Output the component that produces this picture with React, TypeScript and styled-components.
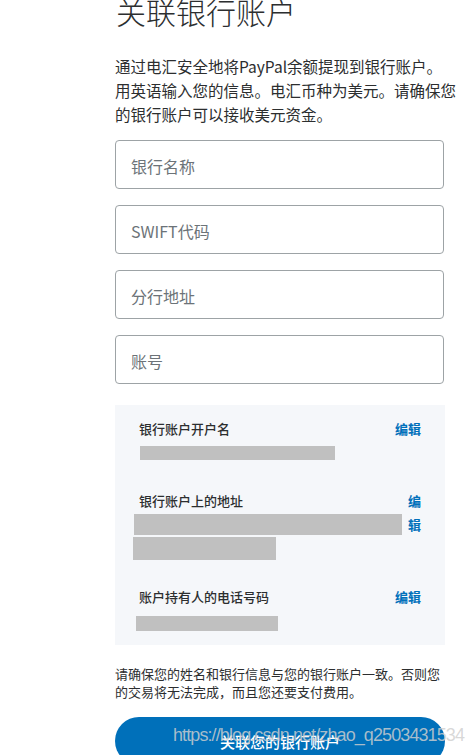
import styled, { createGlobalStyle } from "styled-components";

const GlobalStyle = createGlobalStyle`
  body {
    margin: 0;
    background: #fff;
    font-family: "Noto Sans CJK SC", "Noto Sans", sans-serif;
    color: #2c2e2f;
  }
`;

type Bar = { w: number; h: number; mt: number; ml: number; mb?: number };

type Detail = {
  label: string;
  bars: Bar[];
  narrowLink?: boolean;
};

const details: Detail[] = [
  { label: "银行账户开户名", bars: [{ w: 195, h: 14, mt: 5, ml: 1, mb: 4 }] },
  {
    label: "银行账户上的地址",
    narrowLink: true,
    bars: [
      { w: 268, h: 21, mt: 1, ml: -5 },
      { w: 143, h: 23, mt: 2, ml: -6 },
    ],
  },
  { label: "账户持有人的电话号码", bars: [{ w: 142, h: 15, mt: 7, ml: -3 }] },
];

const fields = ["银行名称", "SWIFT代码", "分行地址", "账号"];

const App = () => {
  return (
    <>
      <GlobalStyle />
      <Main>
        <Title>关联银行账户</Title>
        <Intro>
          通过电汇安全地将PayPal余额提现到银行账户。
          <br />
          用英语输入您的信息。电汇币种为美元。请确保您
          <br />
          的银行账户可以接收美元资金。
        </Intro>
        <Fields>
          {fields.map((f) => (
            <Field key={f} placeholder={f} />
          ))}
        </Fields>
        <Panel>
          {details.map((d) => (
            <Row key={d.label}>
              <RowBody>
                <RowLabel>{d.label}</RowLabel>
                {d.bars.map((b, i) => (
                  <Redact
                    key={i}
                    style={{
                      width: b.w,
                      height: b.h,
                      marginTop: b.mt,
                      marginLeft: b.ml,
                      marginBottom: b.mb ?? 0,
                    }}
                  />
                ))}
              </RowBody>
              <EditLink $narrow={d.narrowLink}>编辑</EditLink>
            </Row>
          ))}
        </Panel>
        <Notice>
          请确保您的姓名和银行信息与您的银行账户一致。否则您
          <br />
          的交易将无法完成，而且您还要支付费用。
        </Notice>
        <ButtonWrap>
          <SubmitButton>关联您的银行账户</SubmitButton>
          <Watermark>https://blog.csdn.net/zhao_q2503431534</Watermark>
        </ButtonWrap>
      </Main>
    </>
  );
};

export default App;

const Main = styled.main`
  width: 330px;
  margin-left: 115px;
  padding-bottom: 40px;
`;

const Title = styled.h1`
  margin: -4px 0 0 1px;
  font-size: 30px;
  line-height: 30px;
  font-weight: 300;
  color: #2c2e2f;
`;

const Intro = styled.p`
  margin: 28px 0 0;
  font-size: 15.5px;
  line-height: 24px;
  white-space: nowrap;
`;

const Fields = styled.div`
  display: flex;
  flex-direction: column;
  gap: 16px;
  margin-top: 14px;
`;

const Field = styled.input`
  box-sizing: border-box;
  width: 329px;
  height: 49px;
  padding: 3px 15px 0;
  border: 1px solid #9da3a6;
  border-radius: 4px;
  font-family: "Noto Sans CJK SC", "Noto Sans", sans-serif;
  font-size: 16px;
  color: #2c2e2f;
  outline: none;

  &::placeholder {
    color: #6c7378;
  }
`;

const Panel = styled.section`
  margin-top: 21px;
  background: #f5f7fa;
  padding: 12px 24px 14px;
  display: flex;
  flex-direction: column;
  gap: 25px;
`;

const Row = styled.div`
  display: flex;
  justify-content: space-between;
  align-items: flex-start;
  gap: 6px;
`;

const RowBody = styled.div`
  flex: 1;
  min-width: 0;
`;

const RowLabel = styled.div`
  font-size: 13px;
  line-height: 24px;
  font-weight: 500;
  color: #2c2e2f;
`;

const Redact = styled.div`
  background: #c0c0c0;
`;

const EditLink = styled.a<{ $narrow?: boolean }>`
  flex: none;
  width: ${(p) => (p.$narrow ? "13px" : "auto")};
  font-size: 13px;
  line-height: 24px;
  font-weight: 600;
  color: #0070ba;
  cursor: pointer;
  word-break: break-all;
`;

const Notice = styled.p`
  margin: 20px 0 0;
  font-size: 13px;
  line-height: 18px;
  white-space: nowrap;
`;

const ButtonWrap = styled.div`
  position: relative;
  margin-top: 16px;
`;

const SubmitButton = styled.button`
  display: block;
  width: 330px;
  height: 48px;
  border: none;
  border-radius: 24px;
  background: #0070ba;
  color: #fff;
  font-family: "Noto Sans CJK SC", "Noto Sans", sans-serif;
  font-size: 15px;
  font-weight: 500;
  padding-top: 2px;
`;

const Watermark = styled.span`
  position: absolute;
  left: 58px;
  top: 7px;
  font-family: "Liberation Sans", Arial, sans-serif;
  font-size: 18px;
  line-height: 22px;
  letter-spacing: -0.9px;
  color: rgba(207, 207, 207, 0.81);
  white-space: nowrap;
  pointer-events: none;
`;
